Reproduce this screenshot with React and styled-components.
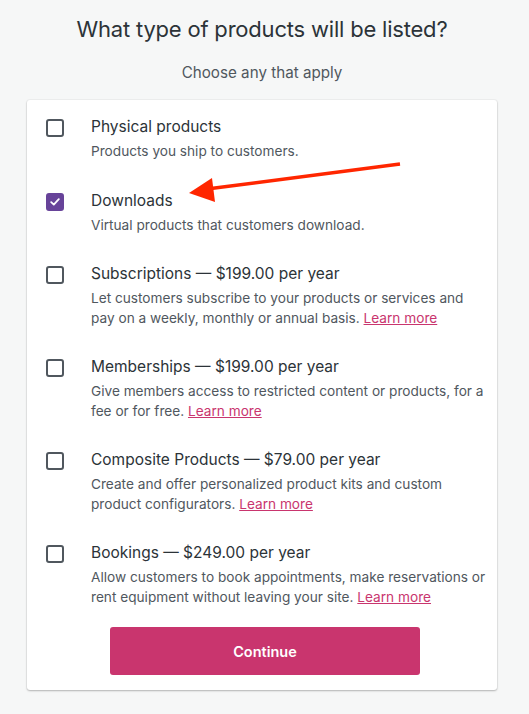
import React, { useState } from "react";
import styled, { createGlobalStyle } from "styled-components";

const GlobalStyle = createGlobalStyle`
  html, body {
    margin: 0;
    padding: 0;
    background: #f6f7f7;
  }
  body {
    font-family: Inter, "Noto Sans", "Liberation Sans", sans-serif;
    -webkit-font-smoothing: antialiased;
  }
`;

const Page = styled.div`
  padding: 14px 32px 25px 27px;
  display: flex;
  flex-direction: column;
  align-items: stretch;
`;

const Heading = styled.h1`
  margin: 0;
  text-align: center;
  font-size: 22px;
  line-height: 30px;
  font-weight: 400;
  color: #2c3338;
  letter-spacing: -0.2px;
`;

const SubHeading = styled.p`
  margin: 19px 0 0;
  text-align: center;
  font-size: 15.2px;
  line-height: 20px;
  color: #50575e;
`;

const Card = styled.div`
  position: relative;
  margin-top: 17px;
  width: 470px;
  box-sizing: border-box;
  background: #fff;
  border-radius: 3px;
  box-shadow: 0 1px 2px rgba(0, 0, 0, 0.25), 0 0 0 1px rgba(0, 0, 0, 0.03);
  padding: 15px 10px 15px 19px;
  display: flex;
  flex-direction: column;
`;

const List = styled.div`
  display: flex;
  flex-direction: column;
  gap: 27px;
`;

const Row = styled.label`
  display: flex;
  align-items: flex-start;
  gap: 27px;
  cursor: pointer;
`;

const Box = styled.span`
  flex: none;
  width: 18px;
  height: 18px;
  box-sizing: border-box;
  margin-top: 4px;
  border-radius: 3px;
  border: 2px solid ${(p) => (p.$checked ? "#674399" : "#50575e")};
  background: ${(p) => (p.$checked ? "#674399" : "#fff")};
  display: flex;
  align-items: center;
  justify-content: center;
`;

const Text = styled.div`
  display: flex;
  flex-direction: column;
`;

const Title = styled.div`
  font-size: 15.5px;
  line-height: 24px;
  color: #2c3338;
`;

const Desc = styled.div`
  margin-top: 3px;
  font-size: 13.65px;
  line-height: 19.5px;
  color: #50575e;
`;

const Link = styled.a`
  color: #c9356e;
  text-decoration: underline;
`;

const Button = styled.button`
  align-self: flex-start;
  margin-top: 20px;
  margin-left: 64px;
  width: 310px;
  height: 48px;
  border: none;
  border-radius: 3px;
  background: #c9356e;
  color: #fff;
  font-family: inherit;
  font-size: 14.5px;
  font-weight: 600;
  cursor: pointer;
`;

const Arrow = styled.svg`
  position: absolute;
  left: 0;
  top: 0;
  pointer-events: none;
`;

const items = [
  { title: "Physical products", desc: "Products you ship to customers." },
  { title: "Downloads", desc: "Virtual products that customers download.", checked: true },
  {
    title: "Subscriptions — $199.00 per year",
    desc: "Let customers subscribe to your products or services and pay on a weekly, monthly or annual basis.",
    link: true,
  },
  {
    title: "Memberships — $199.00 per year",
    desc: "Give members access to restricted content or products, for a fee or for free.",
    link: true,
  },
  {
    title: "Composite Products — $79.00 per year",
    desc: "Create and offer personalized product kits and custom product configurators.",
    link: true,
  },
  {
    title: "Bookings — $249.00 per year",
    desc: "Allow customers to book appointments, make reservations or rent equipment without leaving your site.",
    link: true,
  },
];

export default function App() {
  const [checked, setChecked] = useState(items.map((i) => !!i.checked));

  const toggle = (idx) =>
    setChecked((c) => c.map((v, i) => (i === idx ? !v : v)));

  return (
    <>
      <GlobalStyle />
      <Page>
        <Heading>What type of products will be listed?</Heading>
        <SubHeading>Choose any that apply</SubHeading>
        <Card>
          <List>
            {items.map((item, idx) => (
              <Row key={item.title} onClick={() => toggle(idx)}>
                <Box $checked={checked[idx]}>
                  {checked[idx] && (
                    <svg width="10" height="8" viewBox="0 0 10 8">
                      <path
                        d="M1.2 4.2 L3.8 6.6 L8.8 1.2"
                        fill="none"
                        stroke="#fff"
                        strokeWidth="1.8"
                        strokeLinecap="round"
                        strokeLinejoin="round"
                      />
                    </svg>
                  )}
                </Box>
                <Text>
                  <Title>{item.title}</Title>
                  <Desc>
                    {item.desc}
                    {item.link && (
                      <>
                        {" "}
                        <Link href="#" onClick={(e) => e.preventDefault()}>
                          Learn more
                        </Link>
                      </>
                    )}
                  </Desc>
                </Text>
              </Row>
            ))}
          </List>
          <Button>Continue</Button>
          {/* annotation arrow pointing at Downloads */}
          <Arrow width="470" height="140" viewBox="0 0 470 140">
            <line x1="373" y1="64" x2="180" y2="89" stroke="#ff2600" strokeWidth="3.5" />
            <polygon points="162,93 185,78 188,102" fill="#ff2600" />
          </Arrow>
        </Card>
      </Page>
    </>
  );
}
